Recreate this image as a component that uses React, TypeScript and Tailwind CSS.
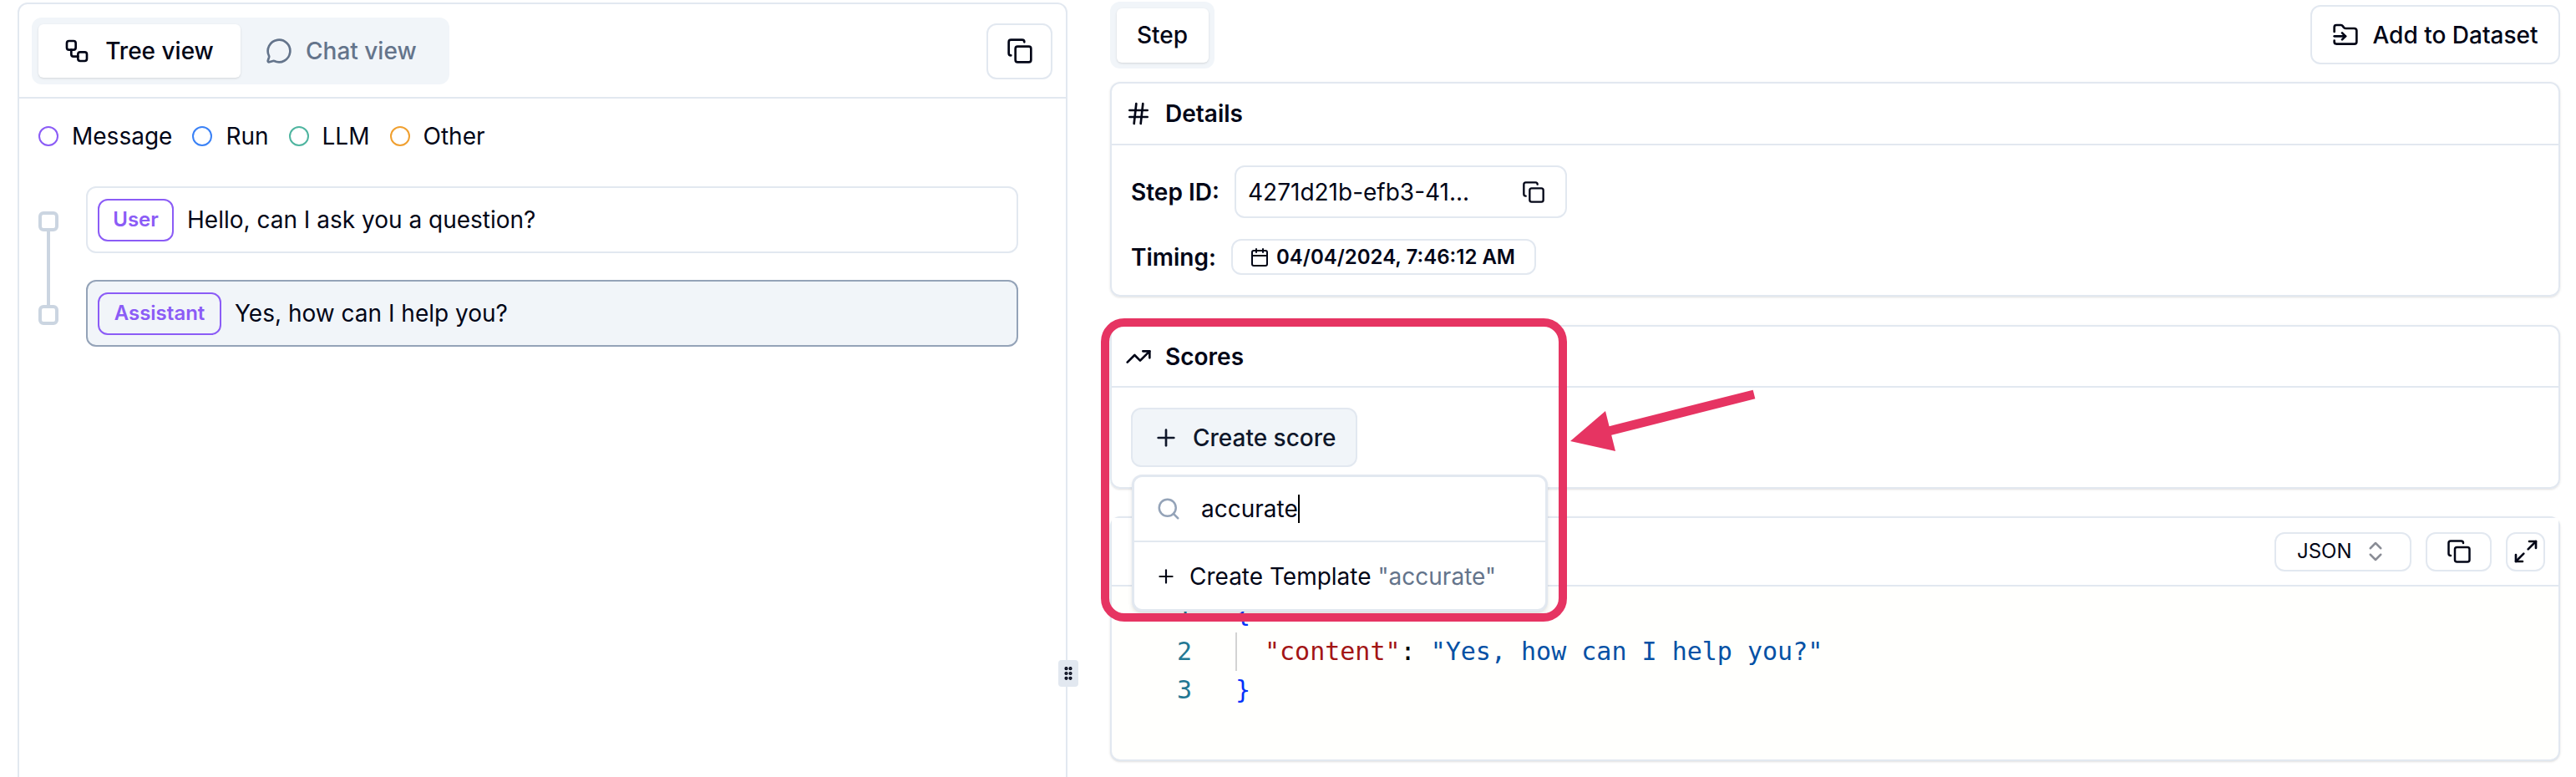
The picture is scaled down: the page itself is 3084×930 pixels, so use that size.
import { Calendar, ChevronsUpDown, Copy, FolderInput, GripVertical, Hash, Maximize2, MessageCircle, Plus, Search, TrendingUp, Workflow } from "lucide-react";

const legend = [
  { label: "Message", border: "border-[#8b5cf6]" },
  { label: "Run", border: "border-[#3b82f6]" },
  { label: "LLM", border: "border-[#4fb5a0]" },
  { label: "Other", border: "border-[#f0a030]" },
];

function TreeRow({ role, text, badgeWidth, selected }: { role: string; text: string; badgeWidth: string; selected?: boolean }) {
  return (
    <div className={`h-20 w-[1116px] rounded-xl border-2 flex items-center pl-3 gap-4 ${selected ? "bg-[#f1f5f9] border-[#94a3b8]" : "bg-white border-[#e2e8f0]"}`}>
      <span className={`${badgeWidth} h-[51px] rounded-xl border-2 border-[#8b5cf6] flex items-center justify-center text-[24px] font-semibold text-[#8b5cf6]`}>
        {role}
      </span>
      <span className="text-[28px] text-[#020617]">{text}</span>
    </div>
  );
}

function CardHeader({ icon, title, height }: { icon: React.ReactNode; title: string; height: string }) {
  return (
    <div className={`${height} border-b-2 border-[#e2e8f0] flex items-center pl-4`}>
      <div className="w-[48px] flex items-center">{icon}</div>
      <span className="text-[28px] font-semibold text-[#020617]">{title}</span>
    </div>
  );
}

export default function App() {
  return (
    <div className="relative w-[3084px] h-[930px] overflow-hidden bg-white flex font-['Inter',sans-serif] text-[#020617]">
      {/* trace panel */}
      <div className="ml-[21px] mt-[3px] w-[1257px] h-[940px] border-2 border-[#e2e8f0] rounded-t-xl">
        <div className="h-[113px] border-b-2 border-[#e2e8f0] flex items-center justify-between pl-[15px] pr-[16px] pt-[1px]">
          <div className="w-[500px] h-20 rounded-xl bg-[#f1f5f9] flex items-center pl-2 gap-[30px]">
            <div className="w-[242px] h-16 rounded-md bg-white shadow-sm flex items-center justify-center gap-[18px] text-[28px] font-medium pr-[2px]">
              <Workflow size={32} strokeWidth={2} />
              Tree view
            </div>
            <div className="flex items-center gap-4 text-[28px] font-medium text-[#64748b]">
              <MessageCircle size={32} strokeWidth={2} />
              Chat view
            </div>
          </div>
          <button className="w-[79px] h-[67px] rounded-xl border-2 border-[#e2e8f0] flex items-center justify-center">
            <Copy size={32} strokeWidth={2} />
          </button>
        </div>

        <div className="pl-[23px] pt-[33px] flex items-center h-[57px] text-[28px]">
          {legend.map((item) => (
            <div key={item.label} className="flex items-center gap-4 mr-[24px]">
              <span className={`w-6 h-6 rounded-full border-2 ${item.border}`} />
              {item.label}
            </div>
          ))}
        </div>

        <div className="flex pl-[23px] pt-[48px]">
          <div className="w-6 flex flex-col items-center pt-[30px]">
            <span className="w-6 h-6 rounded-md border-4 border-[#cbd5e1]" />
            <span className="w-[4px] h-[88px] bg-[#cbd5e1]" />
            <span className="w-6 h-6 rounded-md border-4 border-[#cbd5e1]" />
          </div>
          <div className="ml-[33px] flex flex-col gap-8">
            <TreeRow role="User" text="Hello, can I ask you a question?" badgeWidth="w-[91px]" />
            <TreeRow role="Assistant" text="Yes, how can I help you?" badgeWidth="w-[148px]" selected />
          </div>
        </div>
      </div>

      {/* resize handle */}
      <div className="absolute left-[1267px] top-[790px] w-6 h-8 rounded bg-[#e2e8f0] flex items-center justify-center">
        <GripVertical size={20} strokeWidth={3} />
      </div>

      {/* step panel */}
      <div className="ml-[51px] w-[1736px] flex flex-col">
        <div className="h-[98px] pt-[2px] flex justify-between items-start">
          <div className="w-[125px] h-20 rounded-xl bg-[#f1f5f9] flex items-center justify-center">
            <div className="w-[110px] h-[65px] rounded-md bg-white shadow-sm flex items-center justify-center text-[28px] font-medium">Step</div>
          </div>
          <button className="mt-1 w-[299px] h-[71px] rounded-xl border-2 border-[#e2e8f0] flex items-center justify-center gap-4 text-[28px] font-medium">
            <FolderInput size={32} strokeWidth={2} />
            Add to Dataset
          </button>
        </div>

        <div className="h-[257px] rounded-xl border-2 border-[#e2e8f0] shadow-sm">
          <CardHeader icon={<Hash size={32} strokeWidth={2} />} title="Details" height="h-[74px]" />
          <div className="pl-[23px] pt-[24px] flex flex-col gap-[25px]">
            <div className="flex items-center gap-[16px]">
              <span className="text-[28px] font-semibold w-[108px]">Step ID:</span>
              <div className="w-[398px] h-[63px] rounded-xl border-2 border-[#e2e8f0] flex items-center justify-between pl-[14px] pr-6 text-[28px]">
                4271d21b-efb3-41...
                <Copy size={28} strokeWidth={2} />
              </div>
            </div>
            <div className="flex items-center gap-[16px]">
              <span className="text-[28px] font-semibold w-[104px]">Timing:</span>
              <div className="w-[365px] h-[43px] rounded-xl border-2 border-[#e2e8f0] flex items-center pl-[20px] gap-[8px] text-[24px] font-semibold whitespace-nowrap">
                <Calendar size={24} strokeWidth={2} />
                04/04/2024, 7:46:12 AM
              </div>
            </div>
          </div>
        </div>

        <div className="mt-[34px] h-[196px] rounded-xl border-2 border-[#e2e8f0] shadow-sm">
          <CardHeader icon={<TrendingUp size={32} strokeWidth={2} />} title="Scores" height="h-[73px]" />
          <div className="pl-[23px] pt-[24px]">
            <button className="w-[271px] h-[71px] rounded-xl border-2 border-[#e2e8f0] bg-[#f1f5f9] flex items-center pl-[24px] gap-4 text-[28px] font-medium text-[#0f172a]">
              <Plus size={32} strokeWidth={2} />
              Create score
            </button>
          </div>
        </div>

        <div className="mt-[33px] h-[293px] rounded-xl border-2 border-[#e2e8f0] shadow-sm bg-[#fffffd]">
          <div className="h-[82px] border-b-2 border-[#e2e8f0] bg-white flex items-center justify-end pr-[16px] gap-[17px]">
            <button className="w-[164px] h-[47px] rounded-xl border-2 border-[#e2e8f0] flex items-center justify-between pl-[25px] pr-[26px] text-[24px]">
              JSON
              <ChevronsUpDown size={30} strokeWidth={2} className="text-[#8a8d96]" />
            </button>
            <button className="w-[79px] h-[47px] rounded-xl border-2 border-[#e2e8f0] flex items-center justify-center">
              <Copy size={30} strokeWidth={2} />
            </button>
            <button className="w-[47px] h-[47px] rounded-xl border-2 border-[#e2e8f0] flex items-center justify-center">
              <Maximize2 size={32} strokeWidth={2} className="shrink-0" />
            </button>
          </div>
          <div className="pt-[9px] font-['DejaVu_Sans_Mono',monospace] text-[30px] leading-[46px]">
            <div className="flex">
              <span className="w-[96px] text-right text-[#237893]">1</span>
              <span className="ml-[52px] text-[#0431fa]">{"{"}</span>
            </div>
            <div className="flex">
              <span className="w-[96px] text-right text-[#237893]">2</span>
              <span className="ml-[52px] border-l-2 border-[#d3d3d3] pl-[33px] whitespace-pre">
                <span className="text-[#a31515]">"content"</span>
                <span className="text-black">: </span>
                <span className="text-[#0451a5]">"Yes, how can I help you?"</span>
              </span>
            </div>
            <div className="flex">
              <span className="w-[96px] text-right text-[#237893]">3</span>
              <span className="ml-[52px] text-[#0431fa]">{"}"}</span>
            </div>
          </div>
        </div>
      </div>

      {/* score popover */}
      <div className="absolute left-[1355px] top-[568px] w-[498px] h-[164px] rounded-xl border-[3px] border-[#e2e8f0] bg-white shadow-md">
        <div className="h-[78px] border-b-2 border-[#e2e8f0] flex items-center pl-[26px] text-[28px]">
          <Search size={30} strokeWidth={2} className="text-[#94a3b8]" />
          <span className="ml-[24px]">accurate</span>
          <span className="w-[2px] h-[34px] bg-black" />
        </div>
        <div className="h-[82px] flex items-center pl-[25px] text-[28px]">
          <Plus size={26} strokeWidth={2} />
          <span className="ml-[15px]">Create Template</span>
          <span className="ml-[8px] text-[#64748b]">"accurate"</span>
        </div>
      </div>

      {/* annotation */}
      <div className="absolute left-[1318px] top-[381px] w-[558px] h-[363px] rounded-[28px] border-[10px] border-[#e63462]" />
      <svg className="absolute left-[1870px] top-[450px]" width="250" height="100" viewBox="0 0 250 100">
        <path d="M230 22 L56 66" stroke="#e63462" strokeWidth="11" fill="none" />
        <path d="M10 78 L52 42 L64 90 Z" fill="#e63462" />
      </svg>
    </div>
  );
}
